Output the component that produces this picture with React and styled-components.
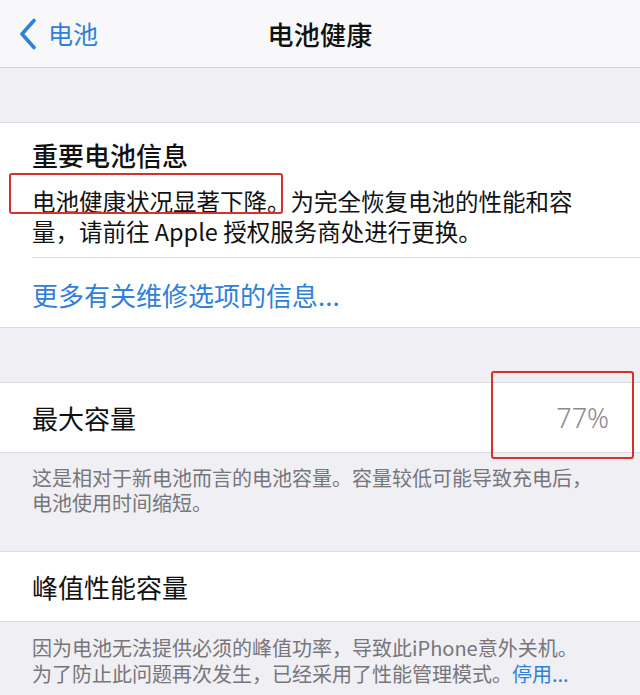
import React from 'react';
import styled, { createGlobalStyle } from 'styled-components';

const GlobalStyle = createGlobalStyle`
  html, body {
    margin: 0;
    padding: 0;
    background: #efeff4;
    font-family: "Noto Sans CJK SC", "Noto Sans", sans-serif;
    -webkit-font-smoothing: antialiased;
  }
`;

const Page = styled.div`
  width: 640px;
  min-height: 695px;
  background: #efeff4;
  overflow: hidden;
`;

const NavBar = styled.header`
  height: 67px;
  display: grid;
  grid-template-columns: 1fr auto 1fr;
  align-items: center;
  background: #f8f8fa;
  border-bottom: 1px solid #d3d3d8;
`;

const Back = styled.div`
  display: flex;
  align-items: center;
  gap: 11px;
  padding-left: 19px;
  color: #2f80d9;
  font-size: 25px;
  line-height: 1;
`;

const Title = styled.h1`
  margin: 0;
  font-size: 26px;
  font-weight: 500;
  color: #111;
  letter-spacing: 0.3px;
`;

const Gap = styled.div`
  height: ${p => p.h}px;
`;

const Section = styled.section`
  background: #fff;
  border-top: 1px solid #dcdce0;
  border-bottom: 1px solid #dcdce0;
`;

const InfoCell = styled.div`
  padding: 15px 0 11px 32px;
`;

const InfoTitle = styled.h2`
  margin: 0 0 14px;
  font-size: 26px;
  line-height: 34px;
  font-weight: 500;
  color: #111;
`;

const Body = styled.p`
  position: relative;
  margin: 0;
  font-size: 23.5px;
  line-height: 30px;
  color: #111;
  white-space: nowrap;
`;

const Mark = styled.span`
  position: absolute;
  border: 2px solid #d8312b;
  border-radius: 3px;
  pointer-events: none;
  left: ${p => p.l}px;
  top: ${p => p.t}px;
  width: ${p => p.w}px;
  height: ${p => p.h}px;
  box-sizing: border-box;
`;

const Divider = styled.div`
  height: 1px;
  margin-left: 32px;
  background: #dcdce0;
`;

const LinkRow = styled.div`
  height: 69px;
  box-sizing: border-box;
  padding: 22px 0 0 32px;
  font-size: 26px;
  line-height: 30px;
  color: #2f80d9;
`;

const Row = styled.div`
  position: relative;
  height: 69px;
  display: flex;
  align-items: center;
  justify-content: space-between;
  padding: 0 31px 0 32px;
`;

const Label = styled.span`
  font-size: 26px;
  color: #111;
`;

const Value = styled.span`
  font-family: "Noto Sans", "Noto Sans CJK SC", sans-serif;
  font-size: 27px;
  font-weight: 300;
  color: #8a8a8e;
`;

const Footer = styled.p`
  margin: 0;
  padding: ${p => p.pt}px 0 0 32px;
  font-size: 20px;
  line-height: ${p => p.lh}px;
  color: #76767b;
  white-space: nowrap;
`;

const FooterLink = styled.span`
  color: #2f80d9;
`;

const Chevron = () => (
  <svg width="18" height="32" viewBox="0 0 18 32">
    <path d="M15 2.5 L3 16 L15 29.5" fill="none" stroke="#2f80d9" strokeWidth="3.6" strokeLinecap="round" strokeLinejoin="round" />
  </svg>
);

export default function App() {
  return (
    <Page>
      <GlobalStyle />
      <NavBar>
        <Back>
          <Chevron />
          <span>电池</span>
        </Back>
        <Title>电池健康</Title>
        <div />
      </NavBar>

      <Gap h={54} />

      <Section>
        <InfoCell>
          <InfoTitle>重要电池信息</InfoTitle>
          <Body>
            <Mark l={-23} t={-13} w={274} h={41} />
            电池健康状况显著下降。为完全恢复电池的性能和容
            <br />
            量，请前往 Apple 授权服务商处进行更换。
          </Body>
        </InfoCell>
        <Divider />
        <LinkRow>更多有关维修选项的信息...</LinkRow>
      </Section>

      <Gap h={54} />

      <Section>
        <Row>
          <Label>最大容量</Label>
          <Value>77%</Value>
          <Mark l={491} t={-12} w={143} h={88} />
        </Row>
      </Section>
      <Footer pt={12} lh={25}>
        这是相对于新电池而言的电池容量。容量较低可能导致充电后，
        <br />
        电池使用时间缩短。
      </Footer>

      <Gap h={36} />

      <Section>
        <Row>
          <Label>峰值性能容量</Label>
        </Row>
      </Section>
      <Footer pt={13} lh={26}>
        因为电池无法提供必须的峰值功率，导致此iPhone意外关机。
        <br />
        为了防止此问题再次发生，已经采用了性能管理模式。<FooterLink>停用...</FooterLink>
      </Footer>
    </Page>
  );
}
